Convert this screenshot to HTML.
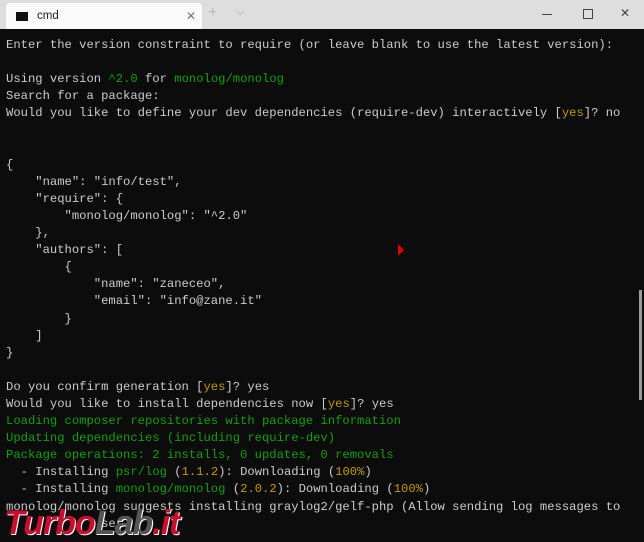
<!DOCTYPE html>
<html><head><meta charset="utf-8"><style>
body{margin:0;width:644px;height:540px;overflow:hidden;background:#0c0c0c;position:relative;font-family:"Liberation Sans",sans-serif}
.bar{position:absolute;left:0;top:0;width:644px;height:29px;background:#dedede}
.tab{position:absolute;left:6px;top:3px;width:196px;height:26px;background:#fafafa;border-radius:4px 4px 0 0}
.ic{position:absolute;left:10px;top:9px;width:12px;height:9px;background:#111}
.tt{position:absolute;left:31px;top:7px;font-size:11.5px;color:#222}
.x{position:absolute;left:180px;top:6px;font-size:12px;color:#777}
.term{position:absolute;left:6px;top:37px;font-family:"Liberation Mono",monospace;font-size:12.2px;line-height:17.1px;color:#cccccc;white-space:pre}
.g{color:#13a10e}.y{color:#c19c00}
</style></head><body>
<div class="bar">
<div class="tab"><div class="ic"></div><div class="tt">cmd</div><div class="x">✕</div></div>
<div style="position:absolute;left:208px;top:4px;font-size:16px;color:#bbb">+</div>
<div style="position:absolute;left:236px;top:6px;font-size:11px;color:#999">⌵</div>
<div style="position:absolute;left:542px;top:14px;width:10px;height:1px;background:#444"></div>
<div style="position:absolute;left:583px;top:9px;width:8px;height:8px;border:1px solid #444"></div>
<div style="position:absolute;left:620px;top:6px;font-size:12px;color:#444">✕</div>
</div>
<div class="term">Enter the version constraint to require (or leave blank to use the latest version):

Using version <span class="g">^2.0</span> for <span class="g">monolog/monolog</span>
Search for a package:
Would you like to define your dev dependencies (require-dev) interactively [<span class="y">yes</span>]? no


{
    "name": "info/test",
    "require": {
        "monolog/monolog": "^2.0"
    },
    "authors": [
        {
            "name": "zaneceo",
            "email": "info@zane.it"
        }
    ]
}

Do you confirm generation [<span class="y">yes</span>]? yes
Would you like to install dependencies now [<span class="y">yes</span>]? yes
<span class="g">Loading composer repositories with package information</span>
<span class="g">Updating dependencies (including require-dev)</span>
<span class="g">Package operations: 2 installs, 0 updates, 0 removals</span>
  - Installing <span class="g">psr/log</span> (<span class="y">1.1.2</span>): Downloading (<span class="y">100%</span>)
  - Installing <span class="g">monolog/monolog</span> (<span class="y">2.0.2</span>): Downloading (<span class="y">100%</span>)
monolog/monolog suggests installing graylog2/gelf-php (Allow sending log messages to
             ser)</div>
<div style="position:absolute;left:639px;top:290px;width:3px;height:110px;background:#999"></div>
<div style="position:absolute;left:398px;top:244px;width:0;height:0;border-left:6px solid #d00;border-bottom:6px solid transparent;border-top:6px solid transparent"></div>
<div style="position:absolute;left:4px;top:506px;font-family:'Liberation Sans',sans-serif;font-weight:bold;font-style:italic;font-size:34px;letter-spacing:-1px;line-height:34px;color:#c8102e;text-shadow:1px 1px 0 #fff">Turbo<span style="color:#555">Lab</span>.it</div>
</body></html>
